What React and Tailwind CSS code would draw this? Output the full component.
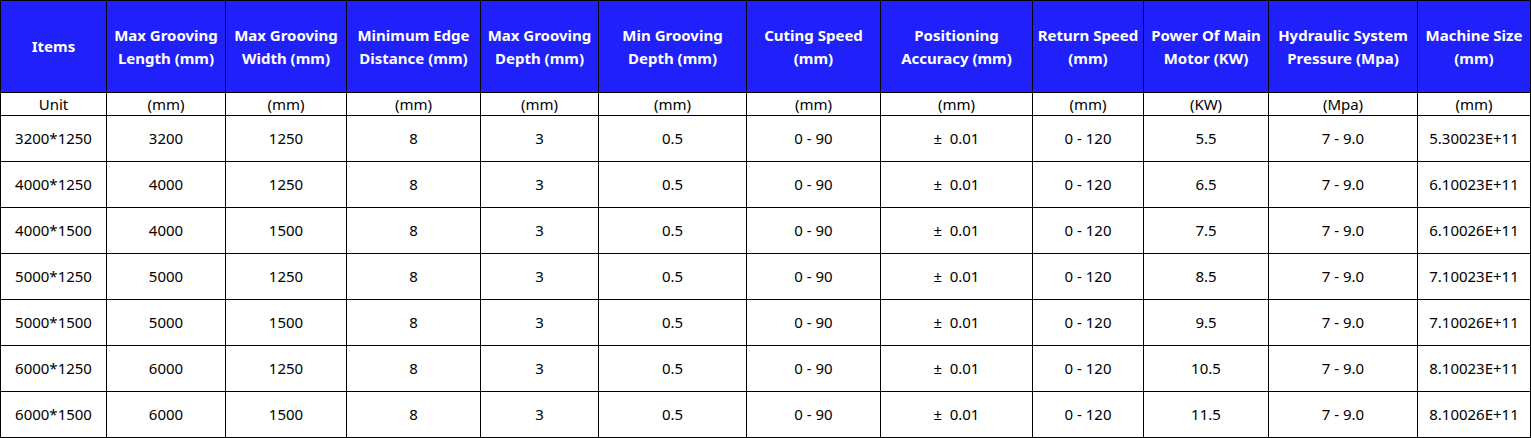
import React from "react";

const headers = [
  "Items",
  "Max Grooving Length (mm)",
  "Max Grooving Width (mm)",
  "Minimum Edge Distance (mm)",
  "Max Grooving Depth (mm)",
  "Min Grooving Depth (mm)",
  "Cuting Speed (mm)",
  "Positioning Accuracy (mm)",
  "Return Speed (mm)",
  "Power Of Main Motor (KW)",
  "Hydraulic System Pressure (Mpa)",
  "Machine Size (mm)",
];

const widths = [106, 119, 121, 134, 118, 148, 134, 152, 111, 125, 149, 113];

const units = ["Unit", "(mm)", "(mm)", "(mm)", "(mm)", "(mm)", "(mm)", "(mm)", "(mm)", "(KW)", "(Mpa)", "(mm)"];

const rows = [
  ["3200*1250", "3200", "1250", "5.5", "5.30023E+11"],
  ["4000*1250", "4000", "1250", "6.5", "6.10023E+11"],
  ["4000*1500", "4000", "1500", "7.5", "6.10026E+11"],
  ["5000*1250", "5000", "1250", "8.5", "7.10023E+11"],
  ["5000*1500", "5000", "1500", "9.5", "7.10026E+11"],
  ["6000*1250", "6000", "1250", "10.5", "8.10023E+11"],
  ["6000*1500", "6000", "1500", "11.5", "8.10026E+11"],
];

const App = () => {
  return (
    <div className="w-[1531px] bg-white font-['Noto_Sans','Open_Sans',sans-serif] text-[15px] text-black">
      <table className="w-[1531px] table-fixed border-collapse">
        <colgroup>
          {widths.map((w, i) => (
            <col key={i} style={{ width: w }} />
          ))}
        </colgroup>
        <thead>
          <tr className="h-[92px] bg-[#2020fa]">
            {headers.map((h) => (
              <th key={h} className="border border-black px-0 text-center align-middle text-[15px] font-bold leading-[23px] text-white">
                {h}
              </th>
            ))}
          </tr>
        </thead>
        <tbody>
          <tr className="h-[23px]">
            {units.map((u, i) => (
              <td key={i} className="border border-black p-0 text-center align-middle leading-[20px]">
                {u}
              </td>
            ))}
          </tr>
          {rows.map(([item, len, wid, power, size]) => (
            <tr key={item} className="h-[46px]">
              <td className="border border-black p-0 text-center">{item}</td>
              <td className="border border-black p-0 text-center">{len}</td>
              <td className="border border-black p-0 text-center">{wid}</td>
              <td className="border border-black p-0 text-center">8</td>
              <td className="border border-black p-0 text-center">3</td>
              <td className="border border-black p-0 text-center">0.5</td>
              <td className="border border-black p-0 text-center">0 - 90</td>
              <td className="border border-black p-0 text-center">{"±\u2002"}0.01</td>
              <td className="border border-black p-0 text-center">0 - 120</td>
              <td className="border border-black p-0 text-center">{power}</td>
              <td className="border border-black p-0 text-center">7 - 9.0</td>
              <td className="border border-black p-0 text-center">{size}</td>
            </tr>
          ))}
        </tbody>
      </table>
    </div>
  );
};

export default App;
